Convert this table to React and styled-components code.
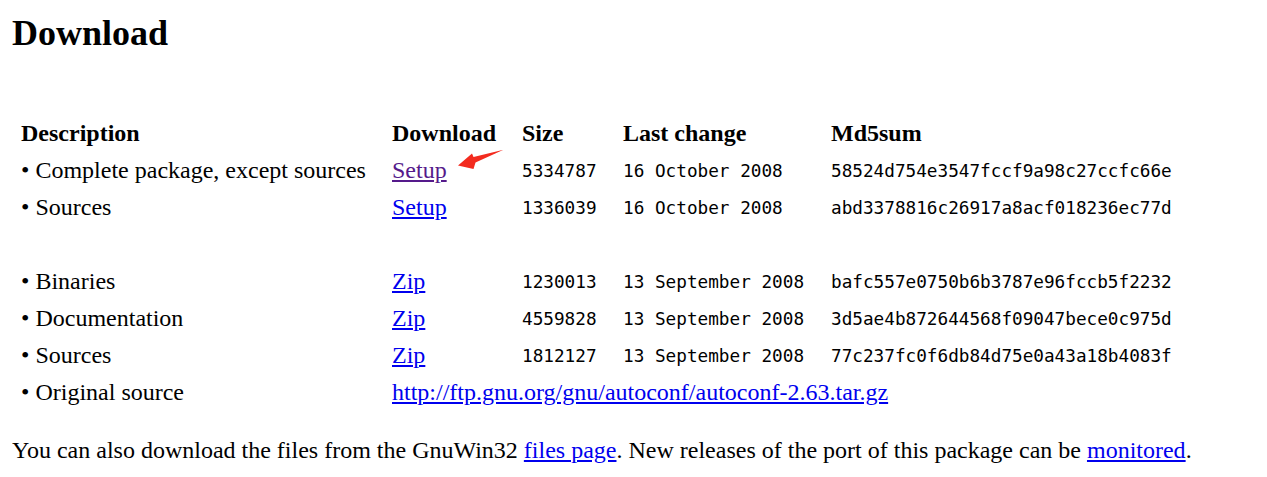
import styled, { createGlobalStyle } from 'styled-components';

const Global = createGlobalStyle`
  body {
    margin: 12px;
    font-family: "Liberation Serif", "Times New Roman", serif;
    font-size: 24px;
    color: #000;
    background: #fff;
  }
`;

const Title = styled.h2`
  font-size: 36px;
  font-weight: bold;
  margin: 0 0 61px;
  line-height: normal;
`;

const Table = styled.table`
  border-collapse: collapse;
  margin-left: 9px;
`;

const Row = styled.tr`
  height: 37px;
`;

const Head = styled.th`
  text-align: left;
  font-weight: bold;
  padding: 0;
  width: ${p => p.w || 'auto'};
`;

const Cell = styled.td`
  padding: 0;
  vertical-align: middle;
  position: relative;
  white-space: nowrap;
`;

const Mono = styled(Cell)`
  font-family: "DejaVu Sans Mono", "Liberation Mono", monospace;
  font-size: 17.7px;
`;

const Link = styled.a`
  color: ${p => (p.visited ? '#551a8b' : '#0000ee')};
  text-decoration: underline;
`;

const Arrow = styled.svg`
  position: absolute;
  left: 63px;
  top: -5px;
  width: 52px;
  height: 24px;
  overflow: visible;
`;

const Footer = styled.p`
  margin: 26px 0 0;
`;

const files = [
  { desc: 'Complete package, except sources', kind: 'Setup', size: '5334787', date: '16 October 2008', md5: '58524d754e3547fccf9a98c27ccfc66e', visited: true, arrow: true },
  { desc: 'Sources', kind: 'Setup', size: '1336039', date: '16 October 2008', md5: 'abd3378816c26917a8acf018236ec77d' },
  null,
  { desc: 'Binaries', kind: 'Zip', size: '1230013', date: '13 September 2008', md5: 'bafc557e0750b6b3787e96fccb5f2232' },
  { desc: 'Documentation', kind: 'Zip', size: '4559828', date: '13 September 2008', md5: '3d5ae4b872644568f09047bece0c975d' },
  { desc: 'Sources', kind: 'Zip', size: '1812127', date: '13 September 2008', md5: '77c237fc0f6db84d75e0a43a18b4083f' },
];

const App = () => (
  <>
    <Global />
    <Title>Download</Title>
    <Table>
      <tbody>
        <Row>
          <Head w="371px">Description</Head>
          <Head w="130px">Download</Head>
          <Head w="101px">Size</Head>
          <Head w="208px">Last change</Head>
          <Head>Md5sum</Head>
        </Row>
        {files.map((f, i) =>
          f ? (
            <Row key={i}>
              <Cell>• {f.desc}</Cell>
              <Cell>
                <Link href="#" visited={f.visited ? 1 : 0}>{f.kind}</Link>
                {f.arrow && (
                  <Arrow viewBox="0 0 52 24">
                    <polygon points="3,18.5 17,6.5 18.5,10 48.5,2.8 20.5,15.5 18.5,22" fill="#f32b1f" />
                  </Arrow>
                )}
              </Cell>
              <Mono>{f.size}</Mono>
              <Mono>{f.date}</Mono>
              <Mono>{f.md5}</Mono>
            </Row>
          ) : (
            <Row key={i}>
              <Cell colSpan={5} />
            </Row>
          )
        )}
        <Row>
          <Cell>• Original source</Cell>
          <Cell colSpan={4}>
            <Link href="#">http://ftp.gnu.org/gnu/autoconf/autoconf-2.63.tar.gz</Link>
          </Cell>
        </Row>
      </tbody>
    </Table>
    <Footer>
      You can also download the files from the GnuWin32 <Link href="#">files page</Link>. New releases of the port of this package can be <Link href="#">monitored</Link>.
    </Footer>
  </>
);

export default App;
